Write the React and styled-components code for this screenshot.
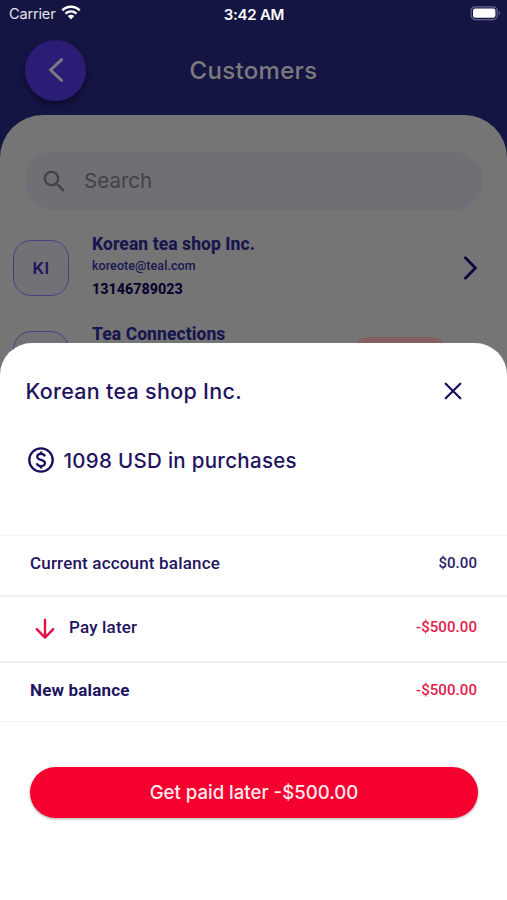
import React from "react";
import styled, { createGlobalStyle } from "styled-components";

const customers = [
  {
    initials: "KI",
    name: "Korean tea shop Inc.",
    email: "koreote@teal.com",
    phone: "13146789023",
  },
  { initials: "", name: "Tea Connections", debt: true },
];

const balances = [
  { label: "Current account balance", amount: "$0.00" },
  { label: "Pay later", amount: "-$500.00", negative: true, arrow: true },
  { label: "New balance", amount: "-$500.00", negative: true, bold: true },
];

const WifiIcon = () => (
  <svg width="20" height="15" viewBox="0 0 20 15" fill="none">
    <path d="M1.3 5.4C6.3 0.6 13.7 0.6 18.7 5.4" stroke="#fff" strokeWidth="2.6" />
    <path d="M4.5 8.6C7.8 5.7 12.2 5.7 15.5 8.6" stroke="#fff" strokeWidth="2.5" />
    <path d="M6.8 11.1C8.6 9.4 11.4 9.4 13.2 11.1L10 14.4Z" fill="#fff" />
  </svg>
);

const BatteryIcon = () => (
  <svg width="32" height="16" viewBox="0 0 32 16" fill="none">
    <rect x="2.2" y="1.8" width="26" height="12.8" rx="4" stroke="#66658c" strokeWidth="1.2" />
    <rect x="4" y="3.6" width="22.4" height="9.2" rx="2.2" fill="#fff" />
    <path d="M29.8 6V10.4C31.4 9.8 31.4 6.6 29.8 6Z" fill="#66658c" />
  </svg>
);

const BackIcon = () => (
  <svg width="16" height="26" viewBox="0 0 16 26" fill="none">
    <path d="M13.6 2.6L2.6 13L13.6 23.4" stroke="#7c7a80" strokeWidth="2.9" strokeLinecap="round" />
  </svg>
);

const SearchIcon = () => (
  <svg width="29" height="29" viewBox="0 0 24 24" fill="#454348">
    <path d="M15.5 14h-.79l-.28-.27A6.47 6.47 0 0 0 16 9.5 6.5 6.5 0 1 0 9.5 16c1.61 0 3.09-.59 4.23-1.57l.27.28v.79l5 4.99L20.49 19l-4.99-5zm-6 0C7.01 14 5 11.99 5 9.5S7.01 5 9.5 5 14 7.01 14 9.5 11.99 14 9.5 14z" />
  </svg>
);

const ForwardIcon = () => (
  <svg width="16" height="26" viewBox="0 0 16 26" fill="none">
    <path d="M2.4 2.8L12.4 13L2.4 23.2" stroke="#09043c" strokeWidth="2.7" strokeLinecap="round" />
  </svg>
);

const CloseIcon = () => (
  <svg width="20" height="20" viewBox="0 0 20 20" fill="none">
    <path d="M2.7 2.7L17.3 17.3M17.3 2.7L2.7 17.3" stroke="#1a0f5e" strokeWidth="2.2" strokeLinecap="round" />
  </svg>
);

const DollarIcon = () => (
  <svg width="26" height="26" viewBox="0 0 26 26" fill="none" stroke="#1a0f5e">
    <circle cx="13" cy="13" r="11.7" strokeWidth="2.3" />
    <path
      d="M17 9.4C16.4 7.7 15 6.9 13 6.9C10.8 6.9 9.2 8 9.2 9.8C9.2 11.7 10.8 12.4 13 12.9C15.4 13.5 17 14.2 17 16.1C17 18 15.3 19.1 13 19.1C10.8 19.1 9.2 18.1 8.8 16.3"
      strokeWidth="2.2"
    />
    <path d="M13 4.6V7.2M13 18.8V21.4" strokeWidth="2.4" />
  </svg>
);

const ArrowDownIcon = () => (
  <svg width="20" height="22" viewBox="0 0 20 22" fill="none">
    <path
      d="M10 1.8V19.6M1.8 11.2L10 19.6L18.2 11.2"
      stroke="#e5123f"
      strokeWidth="2.4"
      strokeLinecap="round"
      strokeLinejoin="round"
    />
  </svg>
);

const App = () => {
  return (
    <Screen>
      <GlobalStyle />
      <StatusBar>
        <Carrier>
          Carrier <WifiIcon />
        </Carrier>
        <Time>3:42 AM</Time>
        <Battery>
          <BatteryIcon />
        </Battery>
      </StatusBar>
      <Header>
        <BackButton>
          <BackIcon />
        </BackButton>
        <Title>Customers</Title>
      </Header>
      <Content>
        <SearchBox>
          <SearchIcon />
          <SearchText>Search</SearchText>
        </SearchBox>
        {customers.map((customer) => (
          <CustomerRow key={customer.name}>
            <Avatar>{customer.initials}</Avatar>
            <CustomerInfo>
              <Name>{customer.name}</Name>
              <Email>{customer.email}</Email>
              <Phone>{customer.phone}</Phone>
            </CustomerInfo>
            {customer.debt ? <DebtBadge /> : <ForwardIcon />}
          </CustomerRow>
        ))}
      </Content>
      <Sheet>
        <SheetHeader>
          <SheetTitle>Korean tea shop Inc.</SheetTitle>
          <CloseButton>
            <CloseIcon />
          </CloseButton>
        </SheetHeader>
        <Purchases>
          <DollarIcon />
          <PurchasesText>1098 USD in purchases</PurchasesText>
        </Purchases>
        <BalanceList>
          {balances.map((row) => (
            <BalanceRow key={row.label} $tall={row.arrow} $last={row.bold}>
              {row.arrow && (
                <ArrowBox>
                  <ArrowDownIcon />
                </ArrowBox>
              )}
              <Label $bold={row.bold}>{row.label}</Label>
              <Amount $negative={row.negative}>{row.amount}</Amount>
            </BalanceRow>
          ))}
        </BalanceList>
        <PayButton>Get paid later -$500.00</PayButton>
      </Sheet>
    </Screen>
  );
};

const GlobalStyle = createGlobalStyle`
  * {
    box-sizing: border-box;
  }
  body {
    margin: 0;
    background: #151543;
  }
  svg {
    display: block;
    flex-shrink: 0;
  }
`;
const Screen = styled.div`
  position: relative;
  width: 507px;
  height: 900px;
  overflow: hidden;
  background: #151543;
  font-family: Inter, "Liberation Sans", sans-serif;
`;
const StatusBar = styled.div`
  display: grid;
  grid-template-columns: 1fr auto 1fr;
  align-items: center;
  height: 28px;
  padding: 0 6px 0 9px;
  color: #fff;
  font-size: 15px;
`;
const Carrier = styled.div`
  display: flex;
  align-items: center;
  gap: 6px;
  color: #e2e2ec;
  font-size: 14.6px;
  letter-spacing: -0.2px;
  svg {
    margin-top: -3px;
  }
`;
const Time = styled.div`
  margin-right: 2px;
  font-weight: 600;
  letter-spacing: -0.25px;
`;
const Battery = styled.div`
  display: flex;
  justify-content: flex-end;
  margin-top: -2px;
`;
const Header = styled.header`
  display: grid;
  grid-template-columns: 61px 1fr 61px;
  align-items: center;
  height: 87px;
  padding: 0 25px 3px;
`;
const BackButton = styled.button`
  display: flex;
  align-items: center;
  justify-content: center;
  width: 61px;
  height: 61px;
  padding: 0;
  border: none;
  border-radius: 50%;
  background: #2b1c75;
  box-shadow: 0 4px 7px rgba(5, 3, 30, 0.55);
`;
const Title = styled.h1`
  margin: 2px 0 0;
  color: #7b7a7d;
  font-size: 24px;
  font-weight: 500;
  letter-spacing: 0.33px;
  line-height: 30px;
  text-align: center;
`;
const Content = styled.main`
  height: 785px;
  padding: 37px 0 0;
  border-radius: 43px 43px 0 0;
  background: #757575;
`;
const SearchBox = styled.div`
  display: flex;
  align-items: center;
  gap: 15px;
  height: 58px;
  margin: 0 24px 13px 25px;
  padding-left: 15px;
  border-radius: 29px;
  background: #706f75;
`;
const SearchText = styled.span`
  margin-top: -2px;
  color: #434246;
  font-size: 20.5px;
  letter-spacing: 0.04px;
`;
const CustomerRow = styled.div`
  display: flex;
  align-items: center;
  height: 90.5px;
  padding: 0 28px 0 13px;
`;
const Avatar = styled.div`
  display: flex;
  align-items: center;
  justify-content: center;
  width: 56px;
  height: 56px;
  margin-right: 23px;
  border: 1.5px solid #513a82;
  border-radius: 18px;
  background: #727176;
  color: #20135c;
  font-size: 16.5px;
  font-weight: 600;
  letter-spacing: 0.3px;
`;
const CustomerInfo = styled.div`
  flex: 1;
  height: 71px;
  color: #18164f;
  font-family: Roboto, "Liberation Sans", sans-serif;
`;
const Name = styled.div`
  font-size: 17.5px;
  font-weight: 800;
  letter-spacing: 0.07px;
  line-height: 22px;
`;
const Email = styled.div`
  font-size: 12.5px;
  font-weight: 500;
  letter-spacing: 0.07px;
  line-height: 21px;
`;
const Phone = styled.div`
  color: #07042e;
  font-size: 14.3px;
  font-weight: 800;
  line-height: 26px;
`;
const DebtBadge = styled.div`
  width: 90px;
  height: 44px;
  margin-right: 34px;
  border-radius: 12px;
  background: #845f62;
`;
const Sheet = styled.section`
  position: absolute;
  top: 343px;
  left: 0;
  right: 0;
  bottom: 0;
  border-radius: 32px 32px 0 0;
  background: #fff;
  color: #1f1460;
`;
const SheetHeader = styled.div`
  display: flex;
  align-items: center;
  justify-content: space-between;
  height: 95px;
  padding: 0 44px 0 25.5px;
`;
const SheetTitle = styled.h2`
  margin: 0;
  font-size: 21.5px;
  font-weight: 500;
  letter-spacing: 0.29px;
`;
const CloseButton = styled.button`
  padding: 0;
  border: none;
  background: transparent;
`;
const Purchases = styled.div`
  display: flex;
  align-items: center;
  height: 44px;
  padding-left: 27.5px;
`;
const PurchasesText = styled.span`
  margin-left: 10px;
  font-size: 20.5px;
  font-weight: 500;
  letter-spacing: 0.3px;
`;
const BalanceList = styled.div`
  margin-top: 53px;
  border-top: 1px solid #f5f5f5;
  font-family: Roboto, "Liberation Sans", sans-serif;
`;
const BalanceRow = styled.div`
  display: flex;
  align-items: center;
  height: ${({ $tall }) => ($tall ? "66px" : "61px")};
  padding: 0 30px ${({ $tall }) => ($tall ? "4px" : "5px")};
  border-bottom: ${({ $last }) => ($last ? "1px" : "2px")} solid #f0f0f1;
  ${({ $last }) => $last && "height: 59px;"}
`;
const ArrowBox = styled.span`
  margin: 3px 14px 0 5px;
`;
const Label = styled.span`
  flex: 1;
  font-size: 17px;
  font-weight: ${({ $bold }) => ($bold ? 700 : 500)};
  letter-spacing: 0.18px;
`;
const Amount = styled.span`
  color: ${({ $negative }) => ($negative ? "#e3204c" : "#2b2068")};
  font-size: 15px;
  font-weight: 500;
  letter-spacing: 0.07px;
`;
const PayButton = styled.button`
  display: block;
  width: 448px;
  height: 51px;
  margin: 45px 0 0 30px;
  padding: 0 0 2px;
  border: none;
  border-radius: 26px;
  background: #f5002f;
  box-shadow: 0 1px 3px rgba(0, 0, 0, 0.35);
  color: #ffe9ee;
  font-family: inherit;
  font-size: 18.6px;
  font-weight: 500;
`;
export default App;
